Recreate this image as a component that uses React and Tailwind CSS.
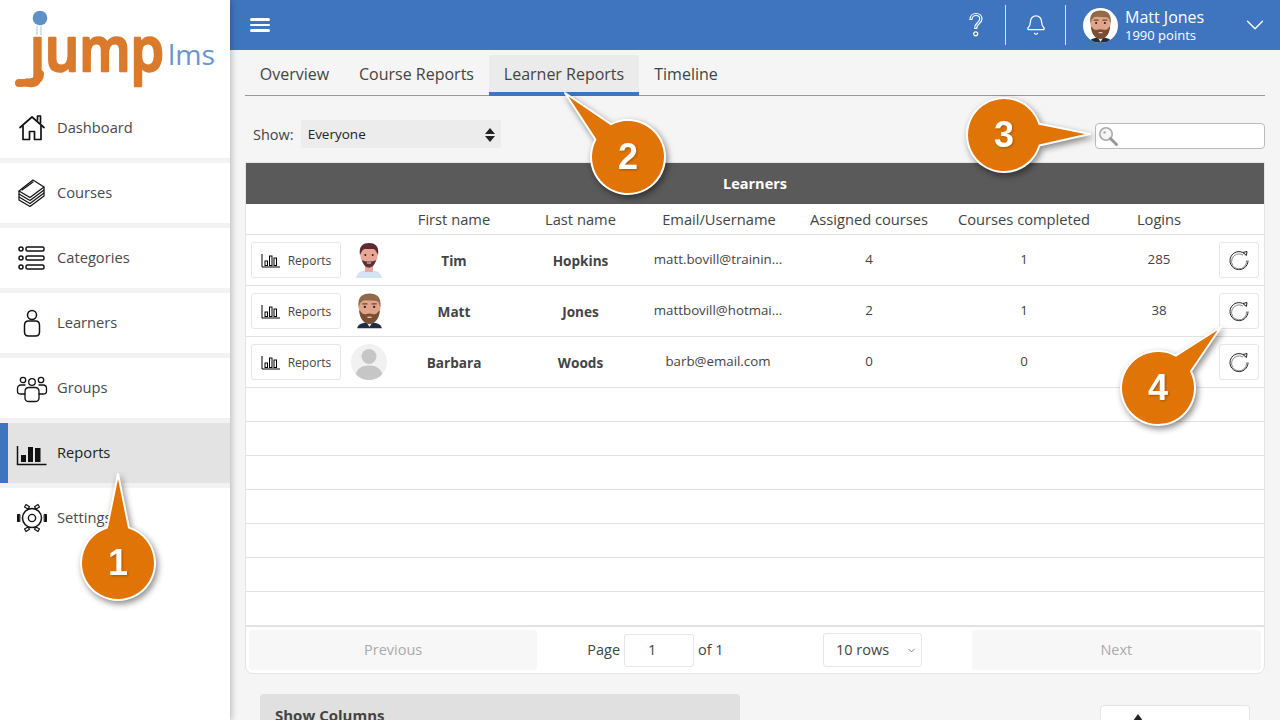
import React from "react";
import { ChevronDown, Bell } from "lucide-react";

const S = { fill: "none", stroke: "#111", strokeWidth: 1.5, strokeLinecap: "round", strokeLinejoin: "round" };

const HomeIcon = () => (
  <svg width="32" height="32" viewBox="0 0 32 32" {...S} strokeWidth="1.7">
    <path d="M4 15.5 16 5l12 10.5" />
    <path d="M21.5 8V4h3v7" />
    <path d="M7 14v13.500h6.500V19.500h5V27.500H25V14" />
  </svg>
);
const CoursesIcon = () => (
  <svg width="32" height="32" viewBox="0 0 32 32" {...S} strokeWidth="1.2">
    <path d="M3 14 17 3l11 7-14 10.500z" />
    <path d="M3 14v3l11 6.500L28 13v-3" />
    <path d="M3 17v3l11 6.500L28 16v-3" />
    <path d="M3 20v3l11 6.500L28 19v-3" />
    <path d="M6 13 17 5" />
  </svg>
);
const CategoriesIcon = () => (
  <svg width="32" height="32" viewBox="0 0 32 32" {...S} strokeWidth="1.5">
    <circle cx="5" cy="7" r="2" />
    <circle cx="5" cy="16" r="2" />
    <circle cx="5" cy="25" r="2" />
    <rect x="10" y="5" width="18" height="4" rx="1.500" />
    <rect x="10" y="14" width="18" height="4" rx="1.500" />
    <rect x="10" y="23" width="18" height="4" rx="1.500" />
  </svg>
);
const LearnerIcon = () => (
  <svg width="32" height="32" viewBox="0 0 32 32" {...S}>
    <circle cx="16" cy="8" r="4.500" />
    <path d="M12.500 14h7c2.500 0 4 2 4 4.500V25c0 2.500-1.500 4-4 4h-7c-2.500 0-4-1.500-4-4v-6.500c0-2.500 1.500-4.500 4-4.500z" />
  </svg>
);
const GroupsIcon = () => (
  <svg width="32" height="32" viewBox="0 0 32 32" {...S} strokeWidth="1.3">
    <circle cx="7" cy="8" r="2.700" />
    <circle cx="25" cy="8" r="2.700" />
    <circle cx="16" cy="10" r="3.300" />
    <path d="M9 13H5c-2 0-3.500 1.500-3.500 3.500v3C1.500 21 3 22 5 22h4" />
    <path d="M23 13h4c2 0 3.500 1.500 3.500 3.500v3c0 1.500-1.500 2.500-3.500 2.500h-4" />
    <path d="M13 15.500h6c2.500 0 4 1.500 4 4V26c0 2-1.500 3.500-4 3.500h-6c-2.500 0-4-1.500-4-3.500v-6.500c0-2.500 1.500-4 4-4z" />
  </svg>
);
const ReportsIcon = () => (
  <svg width="32" height="32" viewBox="0 0 32 32">
    <path d="M1.500 9v18.500h29" fill="none" stroke="#111" strokeWidth="1.500" />
    <rect x="5" y="18" width="5" height="7" fill="#111" />
    <rect x="12" y="10" width="5" height="15" fill="#111" />
    <rect x="19" y="11" width="5.500" height="14" fill="#111" />
  </svg>
);
const SettingsIcon = () => (
  <svg width="32" height="32" viewBox="0 0 32 32" {...S} strokeWidth="1.400">
    <circle cx="16" cy="16" r="3.600" />
    <circle cx="16" cy="16" r="9.500" strokeWidth="1.500" />
    <path d="M3.500 12.500H1.500v7h2zM28.500 12.500h2v7h-2z" fill="#111" strokeWidth="1" />
    <path d="m10 2.500 3.500 2.200-1.500 2.300-3.500-2zM22 2.500l-3.500 2.200 1.500 2.300 3.500-2zM10 29.500l3.500-2.200-1.500-2.300-3.500 2zM22 29.500l-3.500-2.200 1.500-2.300 3.500 2z" strokeWidth="1.200" />
  </svg>
);
const ChartIcon = () => (
  <svg width="20" height="16" viewBox="0 0 20 16" fill="none" stroke="#000" strokeWidth="1">
    <path d="M1 1v13h18" />
    <rect x="4" y="8" width="2.500" height="4.500" />
    <rect x="8.500" y="3" width="2.500" height="9.500" />
    <rect x="13" y="5" width="2.500" height="7.500" />
  </svg>
);
const RefreshIcon = () => (
  <svg width="22" height="22" viewBox="0 0 22 22" fill="none" stroke="#222" strokeWidth="1">
    <path d="M16.500 4.500A9 9 0 1 0 20 11.500" />
    <path d="M15 6A7.500 7.500 0 1 0 18.500 11.500" stroke="#888" />
    <path d="M15 3.500 19 2.500l-.6 4z" fill="#fff" />
  </svg>
);
const SearchIcon = () => (
  <svg width="22" height="22" viewBox="0 0 22 22">
    <circle cx="9" cy="9" r="6.200" fill="#f4f4f4" stroke="#aaa" strokeWidth="1.600" />
    <circle cx="7.500" cy="7.500" r="1.200" fill="#aaa" />
    <path d="m13.500 13.500 6 6" stroke="#999" strokeWidth="3" strokeLinecap="round" />
  </svg>
);
const HelpIcon = () => (
  <svg width="18" height="26" viewBox="0 0 18 26" fill="none" stroke="#fff" strokeWidth="1.200">
    <path d="M3 7.500C3 4 5.500 1.500 9 1.500s6 2.300 6 5.500c0 2.500-1.500 3.800-3 5-1.600 1.300-2.300 2.300-2.300 4.500h-2c0-3 .8-4.300 2.600-5.800 1.300-1.100 2.400-2 2.400-3.700 0-2-1.500-3.500-3.700-3.500S5 5 5 7.500z" />
    <circle cx="8.700" cy="21.800" r="2" />
  </svg>
);
const MattFace = ({ size = 30 }) => (
  <svg width={size} height={size * 34 / 30} viewBox="0 0 30 34">
    <path d="M3 34c1-4 5-5.500 12-5.500S26 30 27 34z" fill="#1f2c44" />
    <path d="m12.500 29 2.500 4 2.500-4z" fill="#e8edf2" />
    <ellipse cx="15" cy="14" rx="10.500" ry="12.500" fill="#e0a48a" />
    <path d="M4.500 14C3 4 8 .5 15 .5S27 4 25.500 14L24 9.500c-1-1.500-2-2-4-2-3 0-6-.5-9-.5-2 0-3.500 1-5 3z" fill="#92694a" />
    <path d="M5 17c.5 7 4 13 10 13s9.500-6 10-13l-1.500 1c-1 2-3 3-5 2.500-2.500-.8-4.500-.8-7 0-2 .5-4-.5-5-2.500z" fill="#7a4e33" />
    <circle cx="10.500" cy="13.500" r="1.100" fill="#222" />
    <circle cx="19.500" cy="13.500" r="1.100" fill="#222" />
    <path d="M8 10.500h5M17 10.500h5" stroke="#6b4a32" strokeWidth="1.300" />
    <path d="M13 23.500h4" stroke="#edc3b0" strokeWidth="1.300" />
  </svg>
);
const TimFace = () => (
  <svg width="30" height="36" viewBox="0 0 30 36">
    <path d="M2 36c1-6 6-8 13-8s12 2 13 8z" fill="#d5e4f3" />
    <rect x="11" y="22" width="8" height="8" fill="#e6a999" />
    <ellipse cx="15" cy="13" rx="8.700" ry="11" fill="#e8a795" />
    <path d="M6 13C4.500 4 9 1 15 1s10.500 3 9 12l-1.500-3c-1-2-2-3-3.500-3h-8C9.500 7 8.500 8 7.500 10z" fill="#5b2b33" />
    <path d="M8 18c1 5 4 7.500 7 7.500s6-2.500 7-7.500c-2 1.500-4 1.500-7 1.500S10 19.500 8 18z" fill="#5a3038" />
    <circle cx="11.300" cy="13" r="1" fill="#222" />
    <circle cx="18.700" cy="13" r="1" fill="#222" />
    <path d="M13 21h4" stroke="#e8c2b4" strokeWidth="1.200" />
  </svg>
);
const BlankFace = () => (
  <div className="w-[36px] h-[36px] rounded-full bg-[#f1f1f1] overflow-hidden">
    <svg width="36" height="36" viewBox="0 0 36 36">
      <circle cx="18" cy="12.500" r="7.500" fill="#c6c6c6" />
      <path d="M4 36c0-10 5-14.500 14-14.500S32 26 32 36z" fill="#c6c6c6" />
    </svg>
  </div>
);

const Logo = () => (
  <svg width="220" height="98" viewBox="0 0 220 98">
    <text x="30" y="71" fontFamily="'Open Sans', sans-serif" fontWeight="600" fontSize="62" fill="#d97a2c" stroke="#d97a2c" strokeWidth="2.500" strokeLinejoin="round" textLength="134" lengthAdjust="spacingAndGlyphs">jump</text>
    <path d="M40 74c0 8-9 9-21 9" fill="none" stroke="#d97a2c" strokeWidth="8" strokeLinecap="round" />
    <rect x="28" y="10" width="24" height="26" fill="#fff" />
    <circle cx="40" cy="18" r="7.300" fill="#5f90c8" />
    <path d="M37 26v9M41 26v9" stroke="#a7c3e2" strokeWidth="1" />
    <text x="168" y="65" fontFamily="'Open Sans', sans-serif" fontWeight="400" fontSize="28" fill="#6796cc" textLength="47" lengthAdjust="spacingAndGlyphs">lms</text>
  </svg>
);

const NAV = [
  ["Dashboard", HomeIcon],
  ["Courses", CoursesIcon],
  ["Categories", CategoriesIcon],
  ["Learners", LearnerIcon],
  ["Groups", GroupsIcon],
  ["Reports", ReportsIcon, true],
];

const NavRow = ({ label, Icon, active }) => (
  <div className={`h-[60px] flex items-center shrink-0 ${active ? "bg-[#e3e3e3] border-l-[8px] border-[#3f75bf] pl-[8px] text-[#222]" : "bg-white pl-[16px] text-[#4a4a4a]"}`}>
    <Icon />
    <span className="ml-[9px] mb-[2px] text-[14.700px]">{label}</span>
  </div>
);

const Sidebar = () => (
  <aside className="w-[230px] h-full shrink-0 bg-[#f2f2f2] flex flex-col gap-[5px] shadow-[2px_0_6px_rgba(0,0,0,0.22)] relative z-10">
    <div className="h-[98px] bg-white shrink-0 -mb-[5px]"><Logo /></div>
    {NAV.map(([l, I, a]) => <NavRow key={l} label={l} Icon={I} active={a} />)}
    <div className="flex-1 bg-white"><NavRow label="Settings" Icon={SettingsIcon} /></div>
  </aside>
);

const Header = () => (
  <header className="h-[50px] bg-[#3f75bf] flex items-center text-white shrink-0">
    <div className="ml-[20px] w-[20px] flex flex-col gap-[3px]">
      <span className="h-[2.500px] bg-white rounded" />
      <span className="h-[2.500px] bg-white rounded" />
      <span className="h-[2.500px] bg-white rounded" />
    </div>
    <div className="ml-auto flex items-center h-full">
      <div className="w-[18px] flex justify-center mr-[20px]"><HelpIcon /></div>
      <div className="w-px h-[40px] bg-[#d8e3f2]" />
      <div className="w-[59px] flex justify-center"><Bell size={22} strokeWidth={1.4} /></div>
      <div className="w-px h-[40px] bg-[#d8e3f2]" />
      <div className="ml-[17px] w-[35px] h-[35px] rounded-full bg-white overflow-hidden flex justify-center items-end"><MattFace size={29} /></div>
      <div className="ml-[7px] w-[115px] flex flex-col leading-none">
        <span className="text-[16px] leading-[20px]">Matt Jones</span>
        <span className="text-[13px] leading-[16px]">1990 points</span>
      </div>
      <ChevronDown size={30} strokeWidth={1} className="mr-[10px]" />
    </div>
  </header>
);

const Tab = ({ children, active, w }) => (
  <div className={`flex items-center justify-center ${w} ${active ? "h-[41px] pt-px bg-[#ebebeb] border-b-[4px] border-[#3f75bf] rounded-t-[3px]" : "h-[40px] pb-[2px]"}`}>{children}</div>
);

const COLS = "grid grid-cols-[100px_46px_124px_129px_148px_152px_158px_112px_1fr] items-center text-center";

const ROWS = [
  ["Tim", "Hopkins", "matt.bovill@trainin...", "4", "1", "285", TimFace],
  ["Matt", "Jones", "mattbovill@hotmai...", "2", "1", "38", () => <MattFace size={31} />],
  ["Barbara", "Woods", "barb@email.com", "0", "0", "", BlankFace],
];

const BTN = "bg-white border border-[#e6e6e6] rounded-[3px] flex items-center justify-center";

const Row = ({ r }) => {
  const F = r[6];
  return (
    <div className={`${COLS} h-[51px] border-b border-[#e2e2e2] text-[#444]`}>
      <div className={`${BTN} ml-[5px] w-[90px] h-[36px] gap-[7px] text-[12px] pt-px text-[#444]`}><ChartIcon />Reports</div>
      <div className="flex justify-center"><F /></div>
      <b className="text-[13.600px] text-[#444] pt-[3px]">{r[0]}</b>
      <b className="text-[13.600px] text-[#444] pt-[3px]">{r[1]}</b>
      <div className="text-[13.300px] pr-[2px]">{r[2]}</div>
      <div className="text-[13.300px]">{r[3]}</div>
      <div className="text-[13.300px]">{r[4]}</div>
      <div className="text-[13.300px]">{r[5]}</div>
      <div className={`${BTN} ml-[4px] w-[40px] h-[36px]`}><RefreshIcon /></div>
    </div>
  );
};

const Table = () => (
  <section className="bg-white border border-[#e4e4e4] rounded-b-[8px] mt-[14px]">
    <div className="h-[41px] bg-[#5a5a5a] text-white text-[14.500px] font-bold flex items-center justify-center">Learners</div>
    <div className={`${COLS} h-[31px] border-b border-[#e2e2e2] text-[14.700px] text-[#444]`}>
      <div /><div />
      <div>First name</div><div>Last name</div><div>Email/Username</div><div>Assigned courses</div><div>Courses completed</div><div>Logins</div><div />
    </div>
    {ROWS.map((r) => <Row key={r[0]} r={r} />)}
    {[0, 1, 2, 3, 4, 5, 6].map((i) => <div key={i} className="h-[34px] border-b border-[#e2e2e2]" />)}
    <div className="h-[47px] border-t border-[#e2e2e2] flex items-center px-[3px] text-[14.500px] text-[#444]">
      <div className="w-[289px] h-[40px] bg-[#f7f7f7] rounded-[3px] flex items-center justify-center text-[#aaa]">Previous</div>
      <span className="ml-[50px]">Page</span>
      <div className={`${BTN} ml-[4px] w-[70px] h-[33px] pr-[14px]`}>1</div>
      <span className="ml-[4px] w-[29px] whitespace-nowrap">of 1</span>
      <div className={`${BTN} ml-[96px] w-[99px] h-[34px] !justify-start pl-[12px] relative`}>10 rows<ChevronDown size={11} strokeWidth={1.4} className="absolute right-[4px] top-[11px]" /></div>
      <div className="ml-[50px] w-[290px] h-[40px] bg-[#f7f7f7] rounded-[3px] flex items-center justify-center text-[#aaa]">Next</div>
    </div>
  </section>
);

const Callout = ({ n, cx, cy, tx, ty }) => {
  const r = 37, pad = 100;
  const a = Math.atan2(ty - cy, tx - cx), h = 0.3;
  const x1 = cx + r * Math.cos(a - h), y1 = cy + r * Math.sin(a - h);
  const x2 = cx + r * Math.cos(a + h), y2 = cy + r * Math.sin(a + h);
  const d = `M${x1} ${y1}L${tx} ${ty}L${x2} ${y2}A${r} ${r} 0 1 1 ${x1} ${y1}Z`;
  const left = cx - r - pad, top = cy - r - pad, size = 2 * (r + pad);
  return (
    <div className="absolute z-20" style={{ left, top, width: size, height: size }}>
      <svg width={size} height={size} viewBox={`${left} ${top} ${size} ${size}`} className="absolute inset-0 drop-shadow-[2px_3px_3px_rgba(0,0,0,0.45)]">
        <path d={d} fill="#e07406" stroke="#fff" strokeWidth="2" strokeLinejoin="round" />
      </svg>
      <span className="absolute inset-0 flex items-center justify-center text-white font-bold text-[36px] [font-family:'Liberation_Sans',sans-serif] drop-shadow-[1px_1px_1px_rgba(0,0,0,0.25)]">{n}</span>
    </div>
  );
};

export default function App() {
  return (
    <div className="relative w-[1280px] h-[720px] overflow-hidden flex bg-[#f5f5f5] [font-family:'Open_Sans',sans-serif]">
      <Sidebar />
      <main className="flex-1 min-w-0 flex flex-col">
        <Header />
        <div className="px-[15px] flex-1">
          <div className="mt-[5px] h-[41px] border-b border-[#999] flex text-[16px] text-[#444]">
            <Tab w="w-[99px]">Overview</Tab>
            <Tab w="w-[145px]">Course Reports</Tab>
            <Tab w="w-[150px]" active>Learner Reports</Tab>
            <Tab w="w-[94px]">Timeline</Tab>
          </div>
          <div className="mt-[24px] h-[28px] flex items-center text-[14.500px] text-[#444]">
            <span className="ml-[8px] pt-px">Show:</span>
            <div className="ml-[7px] w-[200px] h-[28px] bg-[#ececec] rounded-[2px] flex items-center justify-between pl-[7px] pr-[5px] pt-px text-[13.500px] text-[#222]">
              Everyone
              <svg width="12" height="16" viewBox="0 0 12 16" fill="#222"><path d="M6 1 11 7H1zM6 15 1 9h10z" /></svg>
            </div>
            <div className="ml-auto mt-[4px] w-[170px] h-[26px] bg-white border border-[#bbb] rounded-[4px] flex items-center pl-[1px]"><SearchIcon /></div>
          </div>
          <Table />
          <div className="flex justify-between mt-[20px]">
            <div className="ml-[15px] w-[480px] h-[60px] bg-[#e0e0e0] rounded-t-[4px] px-[15px] pt-[10px] text-[15px] font-bold text-[#444]">Show Columns</div>
            <div className="mt-[11px] mr-[15px] w-[150px] h-[40px] bg-white border border-[#e4e4e4] rounded-[4px] pl-[30px] pt-[8px]">
              <svg width="14" height="12" viewBox="0 0 14 12" fill="#222"><path d="M7 0 12 7H2z" /></svg>
            </div>
          </div>
        </div>
      </main>
      <Callout n="1" cx={118} cy={563} tx={118} ty={474} />
      <Callout n="2" cx={628} cy={157} tx={565} ty={93} />
      <Callout n="3" cx={1004} cy={135} tx={1090} ty={134} />
      <Callout n="4" cx={1158} cy={388} tx={1221} ty={327} />
    </div>
  );
}
